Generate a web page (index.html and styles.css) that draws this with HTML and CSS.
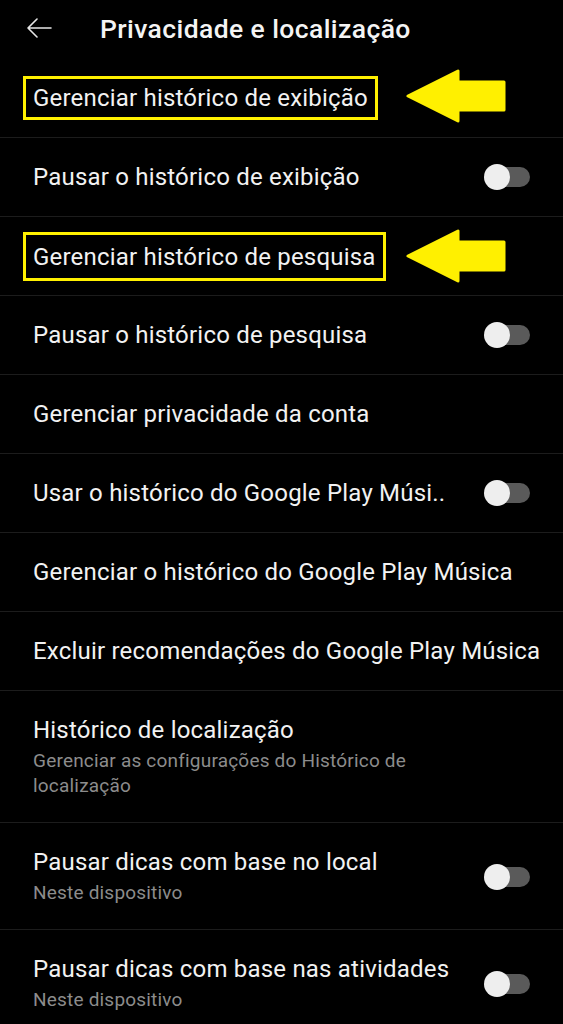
FILE: index.html
```html
<!DOCTYPE html>
<html lang="pt">
<head>
<meta charset="utf-8">
<link rel="stylesheet" href="styles.css">
</head>
<body>
<div class="screen">
  <header class="topbar">
    <svg class="back" viewBox="0 0 26 20" width="26" height="20"><path d="M25 10H2M11 1L2 10l9 9" fill="none" stroke="#e6e6e6" stroke-width="1.6" stroke-linecap="round" stroke-linejoin="round"/></svg>
    <h1 class="title">Privacidade e localização</h1>
  </header>
  <div class="list">
    <div class="row">
      <span class="label boxed">Gerenciar histórico de exibição</span>
      <svg class="arrow arrow-a" viewBox="0 0 100 54" width="100" height="54"><polygon points="2,27 52,2 52,13 98,13 98,41 52,41 52,52" fill="#fff000" stroke="#fff000" stroke-width="3" stroke-linejoin="round"/></svg>
    </div>
    <div class="row">
      <span class="label">Pausar o histórico de exibição</span>
      <span class="toggle"></span>
    </div>
    <div class="row">
      <span class="label boxed boxed-b">Gerenciar histórico de pesquisa</span>
      <svg class="arrow arrow-b" viewBox="0 0 100 54" width="100" height="54"><polygon points="2,27 52,2 52,13 98,13 98,41 52,41 52,52" fill="#fff000" stroke="#fff000" stroke-width="3" stroke-linejoin="round"/></svg>
    </div>
    <div class="row">
      <span class="label">Pausar o histórico de pesquisa</span>
      <span class="toggle"></span>
    </div>
    <div class="row">
      <span class="label">Gerenciar privacidade da conta</span>
    </div>
    <div class="row">
      <span class="label">Usar o histórico do Google Play Músi..</span>
      <span class="toggle"></span>
    </div>
    <div class="row">
      <span class="label">Gerenciar o histórico do Google Play Música</span>
    </div>
    <div class="row">
      <span class="label">Excluir recomendações do Google Play Música</span>
    </div>
    <div class="row tall">
      <div class="texts">
        <span class="label">Histórico de localização</span>
        <span class="sub">Gerenciar as configurações do Histórico de localização</span>
      </div>
    </div>
    <div class="row tall">
      <div class="texts">
        <span class="label">Pausar dicas com base no local</span>
        <span class="sub">Neste dispositivo</span>
      </div>
      <span class="toggle"></span>
    </div>
    <div class="row tall">
      <div class="texts">
        <span class="label">Pausar dicas com base nas atividades</span>
        <span class="sub">Neste dispositivo</span>
      </div>
      <span class="toggle"></span>
    </div>
  </div>
</div>
</body>
</html>
```
FILE: styles.css
```css
* { box-sizing: border-box; }
html, body {
  margin: 0;
  padding: 0;
  background: #000;
}
body {
  font-family: Roboto, "Noto Sans", "Liberation Sans", sans-serif;
  color: #f2f2f2;
  width: 563px;
  height: 1024px;
  overflow: hidden;
}
.topbar {
  height: 59px;
  display: flex;
  align-items: center;
  padding-left: 26px;
  padding-bottom: 3px;
}
.back { flex: none; }
.title {
  margin: 0 0 0 48px;
  font-size: 26.5px;
  font-weight: 500;
  color: #f4f4f4;
  letter-spacing: 0.4px;
}
.row {
  position: relative;
  height: 79px;
  display: flex;
  align-items: center;
  justify-content: space-between;
  padding: 0 33px;
  border-bottom: 1px solid #1c1c1c;
}
.row.tall {
  height: auto;
  align-items: center;
  padding-top: 25px;
  padding-bottom: 24px;
}
.label {
  font-size: 24px;
  line-height: 28px;
  letter-spacing: 0.2px;
  color: #f2f2f2;
  white-space: nowrap;
}
.texts {
  display: flex;
  flex-direction: column;
  gap: 4px;
  max-width: 430px;
}
.sub {
  font-size: 19px;
  line-height: 25px;
  letter-spacing: 0.2px;
  color: #8c8c8c;
}
.boxed {
  border: 3px solid #fff000;
  margin-left: -10px;
  padding: 5px 7px 5px 7px;
}
.boxed-b { padding-top: 8px; padding-bottom: 7px; }
.arrow {
  position: absolute;
  left: 406px;
}
.arrow-a { top: 10px; }
.arrow-b { top: 12px; }
.toggle {
  position: relative;
  flex: none;
  width: 46px;
  height: 26px;
}
.toggle::before {
  content: "";
  position: absolute;
  left: 8px;
  right: 0;
  top: 3px;
  height: 20px;
  border-radius: 10px;
  background: #5a5a5a;
}
.toggle::after {
  content: "";
  position: absolute;
  left: 0;
  top: 0;
  width: 26px;
  height: 26px;
  border-radius: 50%;
  background: #eeeeee;
}
```
